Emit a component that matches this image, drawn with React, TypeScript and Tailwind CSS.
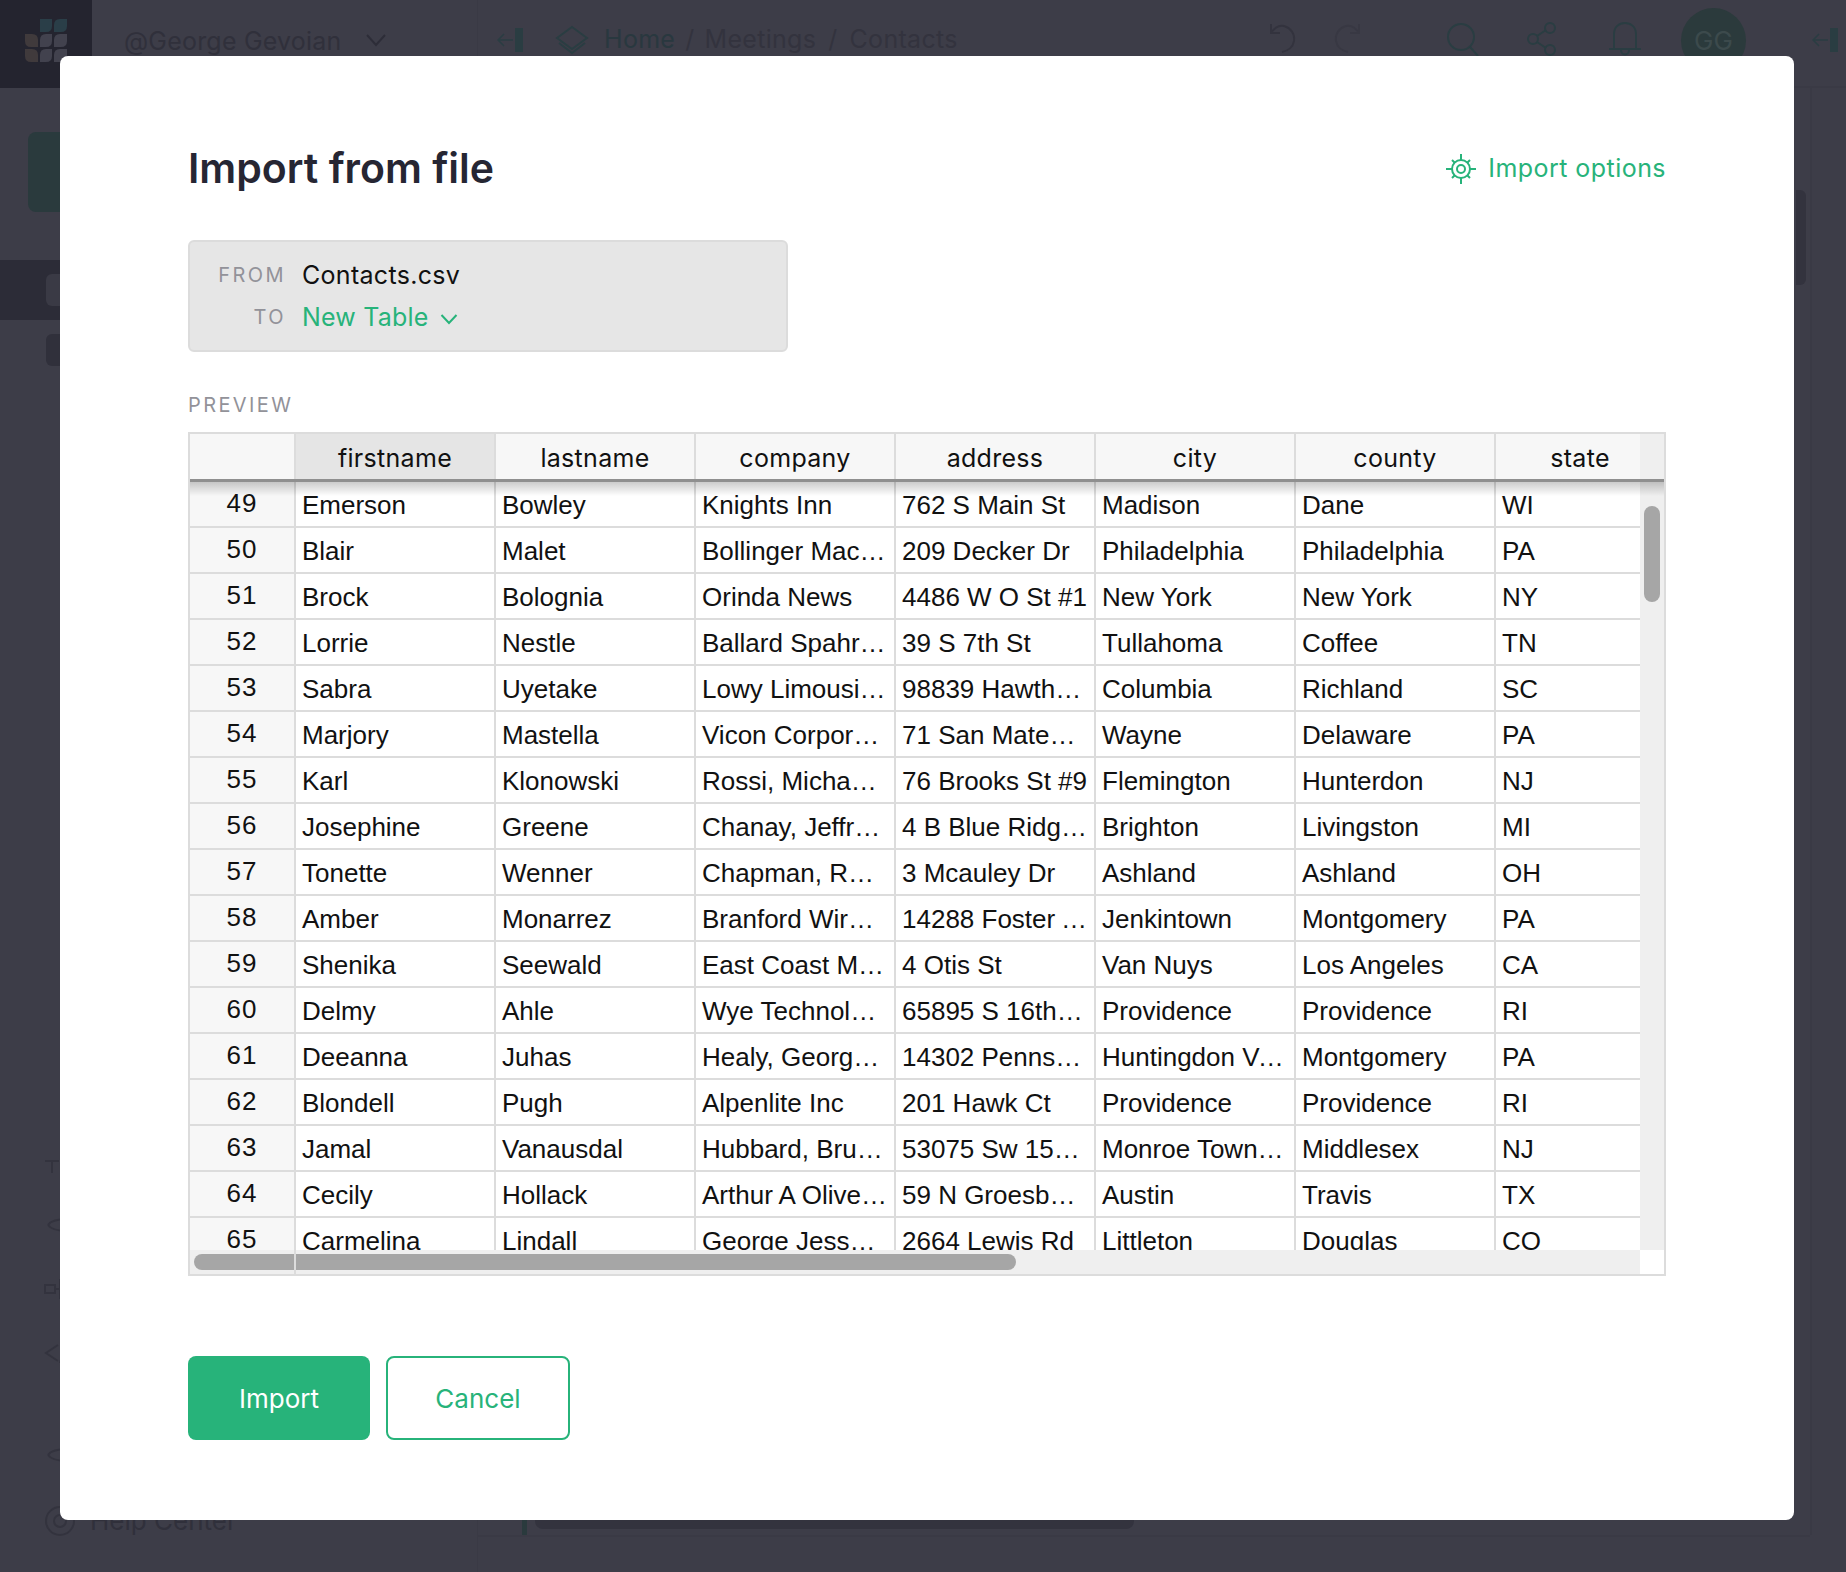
const columns = ['firstname', 'lastname', 'company', 'address', 'city', 'county', 'state'];

const rows = [
  ['49', 'Emerson', 'Bowley', 'Knights Inn', '762 S Main St', 'Madison', 'Dane', 'WI'],
  ['50', 'Blair', 'Malet', 'Bollinger Mach Shp & Shipyard', '209 Decker Dr', 'Philadelphia', 'Philadelphia', 'PA'],
  ['51', 'Brock', 'Bolognia', 'Orinda News', '4486 W O St #1', 'New York', 'New York', 'NY'],
  ['52', 'Lorrie', 'Nestle', 'Ballard Spahr Andrews', '39 S 7th St', 'Tullahoma', 'Coffee', 'TN'],
  ['53', 'Sabra', 'Uyetake', 'Lowy Limousine Service', '98839 Hawthorne Blvd #6101', 'Columbia', 'Richland', 'SC'],
  ['54', 'Marjory', 'Mastella', 'Vicon Corporation', '71 San Mateo Ave', 'Wayne', 'Delaware', 'PA'],
  ['55', 'Karl', 'Klonowski', 'Rossi, Michael M', '76 Brooks St #9', 'Flemington', 'Hunterdon', 'NJ'],
  ['56', 'Josephine', 'Greene', 'Chanay, Jeffrey A Esq', '4 B Blue Ridge Blvd', 'Brighton', 'Livingston', 'MI'],
  ['57', 'Tonette', 'Wenner', 'Chapman, Ross E Esq', '3 Mcauley Dr', 'Ashland', 'Ashland', 'OH'],
  ['58', 'Amber', 'Monarrez', 'Branford Wire & Mfg Co', '14288 Foster Ave #4121', 'Jenkintown', 'Montgomery', 'PA'],
  ['59', 'Shenika', 'Seewald', 'East Coast Marketing', '4 Otis St', 'Van Nuys', 'Los Angeles', 'CA'],
  ['60', 'Delmy', 'Ahle', 'Wye Technologies Inc', '65895 S 16th St', 'Providence', 'Providence', 'RI'],
  ['61', 'Deeanna', 'Juhas', 'Healy, George W Iv', '14302 Pennsylvania Ave', 'Huntingdon Valley', 'Montgomery', 'PA'],
  ['62', 'Blondell', 'Pugh', 'Alpenlite Inc', '201 Hawk Ct', 'Providence', 'Providence', 'RI'],
  ['63', 'Jamal', 'Vanausdal', 'Hubbard, Bruce Esq', '53075 Sw 152nd Ter #615', 'Monroe Township', 'Middlesex', 'NJ'],
  ['64', 'Cecily', 'Hollack', 'Arthur A Oliver & Son Inc', '59 N Groesbeck Hwy', 'Austin', 'Travis', 'TX'],
  ['65', 'Carmelina', 'Lindall', 'George Jessop Carter Jewelers Inc', '2664 Lewis Rd', 'Littleton', 'Douglas', 'CO'],
];

function Logo() {
  return (
    <svg width="42" height="45" viewBox="0 0 42 45">
      <path d="M15 1h12v7q0 6-6 6h-6z" fill="#2a3e48" />
      <path d="M29 7q0-6 6-6h7v7q0 6-6 6h-7z" fill="#2a3e48" />
      <path d="M0 16h7q6 0 6 6v7H6q-6 0-6-6z" fill="#403a3c" />
      <path d="M15 22q0-6 6-6h6v7q0 6-6 6h-6z" fill="#42424e" />
      <path d="M29 22q0-6 6-6h7v7q0 6-6 6h-7z" fill="#42424e" />
      <path d="M0 31h7q6 0 6 6v7H6q-6 0-6-6z" fill="#403a3c" />
      <path d="M15 37q0-6 6-6h6v7q0 6-6 6h-6z" fill="#42424e" />
      <path d="M29 37q0-6 6-6h7v7q0 6-6 6h-7z" fill="#42424e" />
    </svg>
  );
}

function CollapseIcon() {
  return (
    <svg width="26" height="24" viewBox="0 0 26 24" fill="none" stroke="#2a3d42" strokeWidth="1.5">
      <path d="M16 12H1M7 6l-6 6 6 6" />
      <rect x="18" y="0" width="8" height="24" fill="#2a3d42" stroke="none" />
    </svg>
  );
}

function GearIcon() {
  return (
    <svg width="30" height="30" viewBox="0 0 30 30" fill="none" stroke="#27b37a" strokeWidth="2">
      <circle cx="15" cy="15" r="9" />
      <circle cx="15" cy="15" r="4" />
      <path d="M15 0v6M15 24v6M0 15h6M24 15h6M6 6l2.500 2.500M21.500 21.500L24 24M24 6l-2.500 2.500M8.500 21.500L6 24" />
    </svg>
  );
}

// Dimmed page that sits behind the modal
function BackgroundPage() {
  return (
    <div className="flex h-full w-full flex-col bg-[#3d3d48] font-['Inter',sans-serif] text-[#30303b]">
      <header className="flex h-[88px] border-b-2 border-[#3a3a45]">
        <div className="flex h-[88px] w-[92px] shrink-0 items-start justify-center bg-[#24242f] pt-[18px]">
          <Logo />
        </div>
        <div className="flex w-[386px] items-start border-r border-[#3a3a45] pl-[32px] pt-[23px] text-[25px] tracking-[0.2px]">
          <span>@George Gevoian</span>
          <svg className="ml-[24px] mt-[10px]" width="22" height="14" viewBox="0 0 22 14" fill="none" stroke="#2d2d38" strokeWidth="2">
            <path d="M2 2l9 10 9-10" />
          </svg>
        </div>
        <div className="flex flex-1 items-start pl-[19px] pt-[21px] text-[25px] tracking-[0.3px] text-[#33333e]">
          <div className="mt-[7px]">
            <CollapseIcon />
          </div>
          <svg className="ml-[31px] mt-[4px]" width="36" height="30" viewBox="0 0 36 30" fill="none" stroke="#2a3d42" strokeWidth="2">
            <path d="M18 2l15 11-15 11L3 13z" />
            <path d="M5 18l13 10 13-10" />
          </svg>
          <span className="ml-[14px] text-[#29383f]">Home</span>
          <span className="ml-[10px]">/</span>
          <span className="ml-[10px]">Meetings</span>
          <span className="ml-[12px]">/</span>
          <span className="ml-[12px]">Contacts</span>
        </div>
        <div className="flex items-start pr-[8px] pt-[22px]">
          <svg width="30" height="34" viewBox="0 0 30 34" fill="none" stroke="#33333e" strokeWidth="2">
            <path d="M3 2v9h9M3 11c4-6 9-8 13-7 7 2 11 8 10 15-1 6-6 10-12 11" />
          </svg>
          <svg className="ml-[34px]" width="30" height="34" viewBox="0 0 30 34" fill="none" stroke="#383843" strokeWidth="2">
            <path d="M27 2v9h-9M27 11c-4-6-9-8-13-7C7 6 3 12 4 19c1 6 6 10 12 11" />
          </svg>
          <svg className="ml-[84px]" width="34" height="34" viewBox="0 0 34 34" fill="none" stroke="#2a3d42" strokeWidth="2">
            <circle cx="15" cy="15" r="13" />
            <path d="M24 25l8 9" />
          </svg>
          <svg className="ml-[47px]" width="30" height="34" viewBox="0 0 30 34" fill="none" stroke="#2a3d42" strokeWidth="2">
            <circle cx="6" cy="17" r="5" />
            <circle cx="23" cy="6" r="5" />
            <circle cx="23" cy="28" r="5" />
            <path d="M10 14l9-6M10 20l9 6" />
          </svg>
          <svg className="ml-[51px]" width="34" height="36" viewBox="0 0 34 36" fill="none" stroke="#2a3d42" strokeWidth="2">
            <path d="M6 26V12C6 5 11 1 17 1s11 4 11 11v14M1 27h32M13 28c0 6 8 6 8 0" />
          </svg>
          <div className="ml-[39px] mt-[-14px] flex h-[65px] w-[65px] items-center justify-center rounded-full bg-[#2b3a3c] text-[26px] text-[#3c4a4c]">
            GG
          </div>
          <div className="ml-[66px] mt-[6px]">
            <CollapseIcon />
          </div>
        </div>
      </header>
      <div className="flex flex-1">
        <aside className="relative flex w-[478px] flex-col border-r border-[#3a3a45]">
          <div className="ml-[28px] mt-[44px] h-[80px] w-[120px] rounded-[8px] bg-[#2a3a3d]" />
          <div className="mt-[48px] h-[60px] bg-[#2c2c37] pl-[46px] pt-[14px]">
            <div className="h-[32px] w-[40px] rounded-[6px] bg-[#3a3a45]" />
          </div>
          <div className="ml-[46px] mt-[14px] h-[32px] w-[40px] rounded-[6px] bg-[#30303b]" />
          <svg className="ml-[44px] mt-auto" width="24" height="336" viewBox="0 0 24 336" fill="none" stroke="#33333e" strokeWidth="2">
            <path d="M1 2h14M8 2v12" />
            <path d="M4 66c4-6 16-6 20-6M4 66c4 6 16 6 20 6" />
            <rect x="1" y="126" width="10" height="8" />
            <path d="M11 130h5M16 120v20" />
            <path d="M14 186L2 194l12 8M22 184l-6 20" />
            <path d="M4 296c4-6 16-6 20-6M4 296c4 6 16 6 20 6" />
          </svg>
          <div className="flex items-center pb-[32px] pl-[44px] pt-[6px] text-[26px]">
            <svg className="mr-[14px]" width="32" height="32" viewBox="0 0 32 32" fill="none" stroke="#33333e" strokeWidth="2">
              <circle cx="16" cy="16" r="14" />
              <circle cx="16" cy="16" r="6" />
            </svg>
            <span>Help Center</span>
          </div>
        </aside>
        <main className="flex flex-1 flex-col">
          <div className="mt-[1360px]" />
          <div className="ml-[44px] flex h-[87px] w-[612px] border-l-[5px] border-[#2a3a3d]">
            <div className="mb-[6px] ml-[8px] flex-1 rounded-b-[8px] bg-[#33333e]" />
          </div>
          <div className="h-[2px] bg-[#3a3a45]" />
        </main>
        <div className="h-[1447px] w-[36px] border-l-2 border-[#3a3a45]" />
        <div className="absolute left-[1796px] top-[190px] h-[95px] w-[10px] rounded-r-[6px] bg-[#33333e]" />
      </div>
    </div>
  );
}

function PreviewTable() {
  return (
    <div className="relative h-[844px] w-[1478px] border-2 border-[#dcdcdc] bg-white font-['Liberation_Sans',sans-serif] text-[26px] text-[#111111]">
      {/* Header */}
      <div className="relative z-10 flex h-[48px] border-b-[3px] border-[#8f8f8f] bg-[#f7f7f7] font-['Inter',sans-serif] text-[25px] font-normal tracking-[0.3px]">
        <div className="w-[106px] shrink-0 border-r-2 border-[#dcdcdc]" />
        {columns.map((name) => (
          <div
            key={name}
            className={
              name === 'state'
                ? 'flex w-[144px] shrink-0 items-center justify-center pl-[24px] pt-[5px]'
                : name === 'firstname'
                  ? 'flex w-[200px] shrink-0 items-center justify-center border-r-2 border-[#dcdcdc] bg-[#e5e5e5] pt-[5px]'
                  : 'flex w-[200px] shrink-0 items-center justify-center border-r-2 border-[#dcdcdc] pt-[5px]'
            }
          >
            {name}
          </div>
        ))}
        <div className="flex-1 bg-[#efefef]" />
      </div>

      {/* Rows */}
      <div className="relative flex h-[768px]">
        <div className="absolute left-0 right-0 top-0 z-10 h-[14px] bg-gradient-to-b from-black/20 to-transparent" />
        <div className="w-[1450px] shrink-0 overflow-hidden">
          {rows.map((row) => (
            <div key={row[0]} className="flex h-[46px]">
              <div className="flex h-[46px] w-[106px] shrink-0 justify-center border-b-2 border-r-2 border-[#dcdcdc] bg-[#f7f7f7] pt-[6px] leading-[30px] tracking-[1px]">
                {row[0]}
              </div>
              {row.slice(1).map((cell, i) => (
                <div
                  key={i}
                  className={
                    i === 6
                      ? 'h-[46px] w-[144px] shrink-0 truncate border-b-2 border-[#dcdcdc] px-[6px] pt-[8px] leading-[30px]'
                      : 'h-[46px] w-[200px] shrink-0 truncate border-b-2 border-r-2 border-[#dcdcdc] px-[6px] pt-[8px] leading-[30px]'
                  }
                >
                  {cell}
                </div>
              ))}
            </div>
          ))}
        </div>
        <div className="flex-1 bg-[#efefef]" />
      </div>

      {/* Bottom scrollbar track */}
      <div className="flex h-[24px]">
        <div className="w-[1450px] bg-[#efefef]" />
      </div>

      {/* Scrollbar thumbs */}
      <div className="absolute left-[1454px] top-[72px] z-20 h-[96px] w-[16px] rounded-full bg-[#a6a6a6]" />
      <div className="absolute bottom-[4px] left-[4px] h-[16px] w-[822px] rounded-full bg-[#a6a6a6]" />
      <div className="absolute bottom-0 left-[104px] top-[816px] w-[2px] bg-[#dcdcdc]" />
    </div>
  );
}

export default function App() {
  return (
    <div className="relative h-[1572px] w-[1846px] overflow-hidden">
      <BackgroundPage />

      <div className="absolute left-[60px] top-[56px] flex h-[1464px] w-[1734px] flex-col rounded-[8px] bg-white px-[128px] pt-[88px] font-['Inter',sans-serif]">
        <div className="flex h-[48px] items-center justify-between">
          <h1 className="text-[41px] font-semibold leading-[48px] text-[#262633]">Import from file</h1>
          <button className="flex items-center pt-[1px] text-[25px] font-normal tracking-[0.45px] text-[#27b37a]">
            <GearIcon />
            <span className="ml-[12px] pt-[1px]">Import options</span>
          </button>
        </div>

        <div className="mt-[48px] h-[112px] w-[600px] rounded-[6px] border-2 border-[#dcdcdc] bg-[#e6e6e6] pt-[12px]">
          <div className="flex h-[42px] items-center">
            <span className="w-[96px] text-right text-[20px] tracking-[2.4px] text-[#929299]">FROM</span>
            <span className="ml-[16px] pt-[1px] text-[25px] font-normal tracking-[0.3px] text-[#111111]">Contacts.csv</span>
          </div>
          <div className="flex h-[42px] items-center">
            <span className="w-[96px] text-right text-[20px] tracking-[2.4px] text-[#929299]">TO</span>
            <span className="ml-[16px] pt-[1px] text-[25px] font-normal tracking-[0.2px] text-[#27b37a]">New Table</span>
            <svg className="ml-[11px] mt-[3px]" width="18" height="12" viewBox="0 0 18 12" fill="none" stroke="#27b37a" strokeWidth="2">
              <path d="M1.500 2l7.500 8 7.500-8" />
            </svg>
          </div>
        </div>

        <div className="mt-[41px] h-[24px] text-[20px] leading-[24px] tracking-[2.4px] text-[#929299]">PREVIEW</div>

        <div className="mt-[15px]">
          <PreviewTable />
        </div>

        <div className="mt-[80px] flex gap-[16px]">
          <button className="flex h-[84px] w-[182px] items-center justify-center rounded-[8px] bg-[#27b37a] text-[26px] font-normal text-white">
            Import
          </button>
          <button className="flex h-[84px] w-[184px] items-center justify-center rounded-[8px] border-2 border-[#27b37a] text-[26px] font-normal text-[#27b37a]">
            Cancel
          </button>
        </div>
      </div>
    </div>
  );
}
